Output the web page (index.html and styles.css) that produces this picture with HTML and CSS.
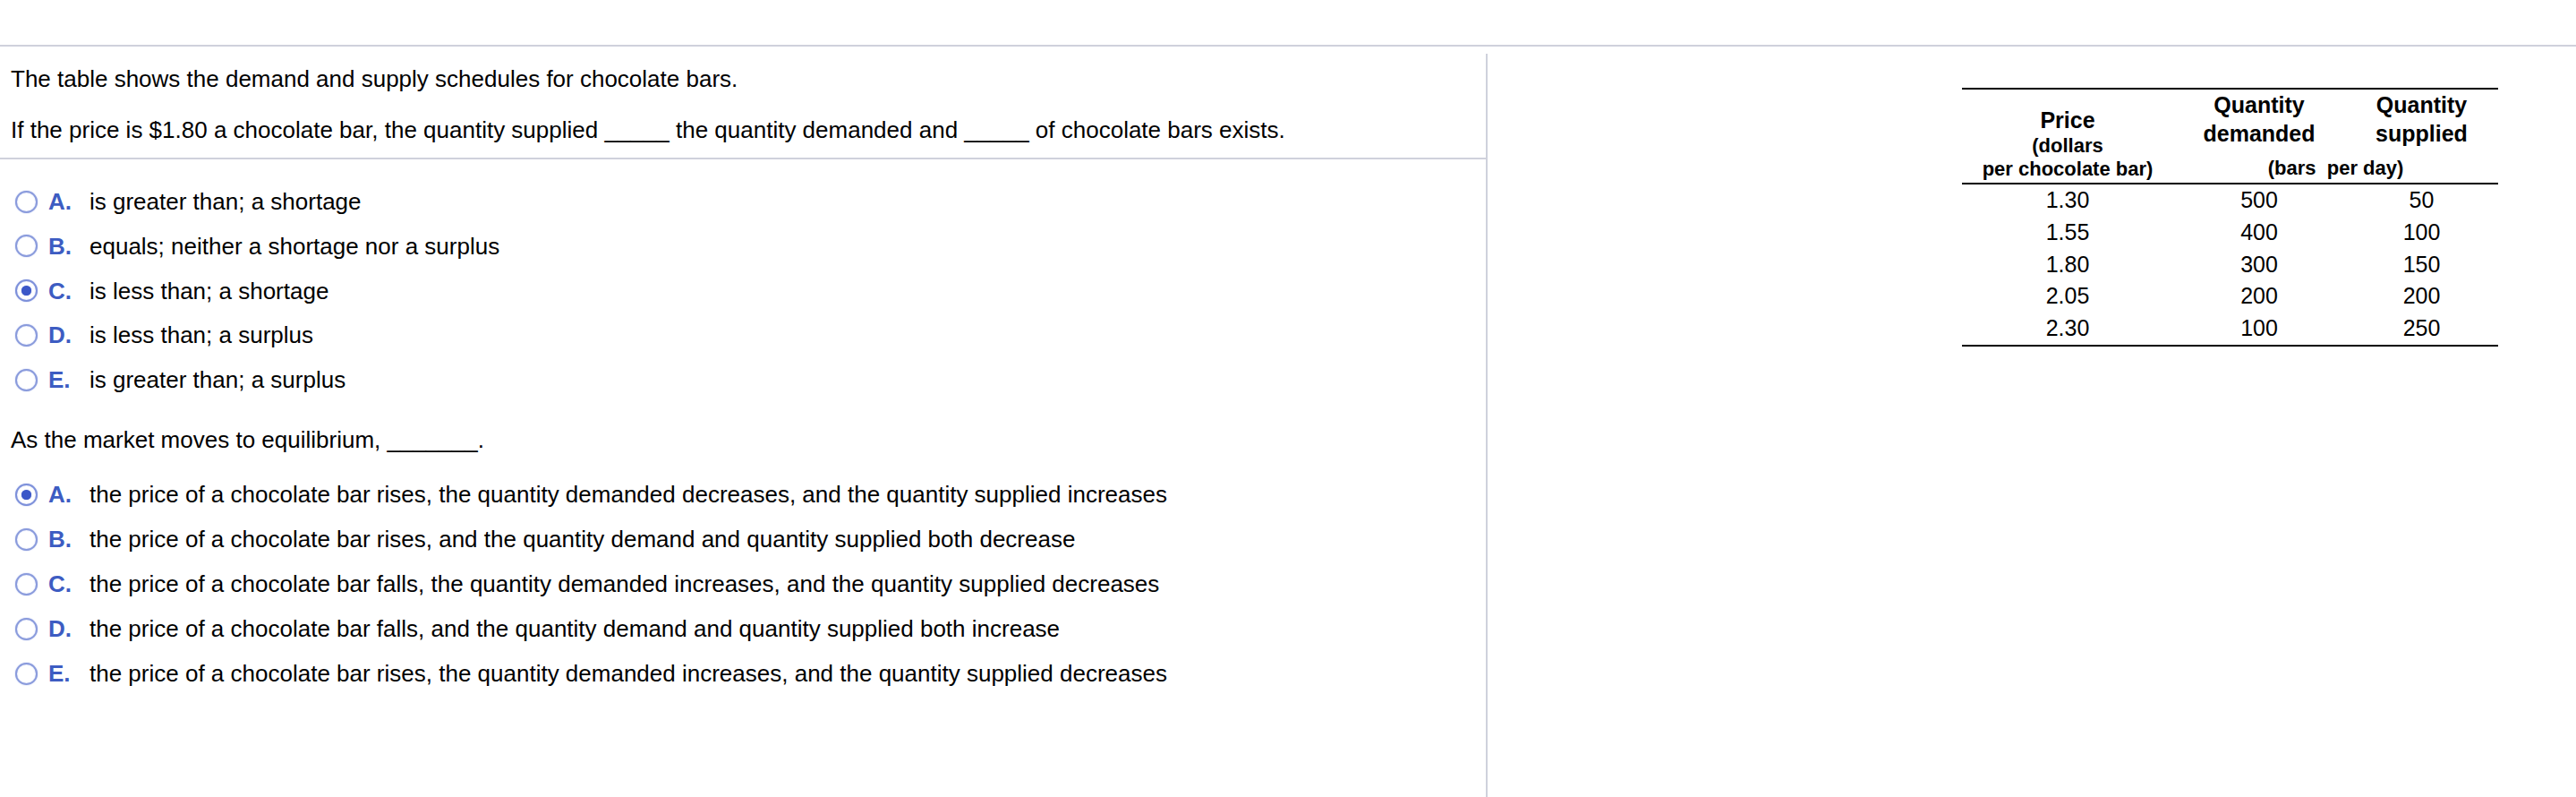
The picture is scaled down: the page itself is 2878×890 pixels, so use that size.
FILE: index.html
```html
<!DOCTYPE html>
<html lang="en">
<head>
<meta charset="utf-8">
<title>Demand and supply schedules</title>
<link rel="stylesheet" href="styles.css">
</head>
<body>
<div class="topbar"></div>
<div class="main">
  <div class="left">
    <div class="question">
      <p class="q-line">The table shows the demand and supply schedules for chocolate bars.</p>
      <p class="q-line q-second">If the price is $1.80 a chocolate bar, the quantity supplied _____ the quantity demanded and _____ of chocolate bars exists.</p>
    </div>
    <ul class="options options-first">
      <li class="option"><span class="radio"></span><span class="letter">A.</span><span class="text">is greater than; a shortage</span></li>
      <li class="option"><span class="radio"></span><span class="letter">B.</span><span class="text">equals; neither a shortage nor a surplus</span></li>
      <li class="option"><span class="radio checked"><span class="dot"></span></span><span class="letter">C.</span><span class="text">is less than; a shortage</span></li>
      <li class="option"><span class="radio"></span><span class="letter">D.</span><span class="text">is less than; a surplus</span></li>
      <li class="option"><span class="radio"></span><span class="letter">E.</span><span class="text">is greater than; a surplus</span></li>
    </ul>
    <p class="q-line q-third">As the market moves to equilibrium, _______.</p>
    <ul class="options options-second">
      <li class="option"><span class="radio checked"><span class="dot"></span></span><span class="letter">A.</span><span class="text">the price of a chocolate bar rises, the quantity demanded decreases, and the quantity supplied increases</span></li>
      <li class="option"><span class="radio"></span><span class="letter">B.</span><span class="text">the price of a chocolate bar rises, and the quantity demand and quantity supplied both decrease</span></li>
      <li class="option"><span class="radio"></span><span class="letter">C.</span><span class="text">the price of a chocolate bar falls, the quantity demanded increases, and the quantity supplied decreases</span></li>
      <li class="option"><span class="radio"></span><span class="letter">D.</span><span class="text">the price of a chocolate bar falls, and the quantity demand and quantity supplied both increase</span></li>
      <li class="option"><span class="radio"></span><span class="letter">E.</span><span class="text">the price of a chocolate bar rises, the quantity demanded increases, and the quantity supplied decreases</span></li>
    </ul>
  </div>
  <div class="right">
    <div class="schedule">
      <div class="sched-head">
        <div class="th-price">
          <span class="th-big">Price</span>
          <span class="th-small">(dollars</span>
          <span class="th-small">per chocolate bar)</span>
        </div>
        <div class="th-qty">Quantity<br>demanded</div>
        <div class="th-qty">Quantity<br>supplied</div>
        <div class="th-unit">(bars&nbsp; per day)</div>
      </div>
      <div class="sched-body">
        <div class="row"><span>1.30</span><span>500</span><span>50</span></div>
        <div class="row"><span>1.55</span><span>400</span><span>100</span></div>
        <div class="row"><span>1.80</span><span>300</span><span>150</span></div>
        <div class="row"><span>2.05</span><span>200</span><span>200</span></div>
        <div class="row"><span>2.30</span><span>100</span><span>250</span></div>
      </div>
    </div>
  </div>
</div>
</body>
</html>
```

FILE: styles.css
```css
html, body {
  margin: 0;
  padding: 0;
  background: #ffffff;
  overflow: hidden;
}

body {
  font-family: "Liberation Sans", Arial, sans-serif;
  color: #000000;
  font-size: 26px;
}

.topbar {
  height: 50px;
  border-bottom: 2px solid #cfd1dc;
}

.main {
  display: flex;
  padding-top: 8px;
}

.left {
  width: 1660px;
  min-height: 830px;
  border-right: 2px solid #cfd1dc;
  flex: none;
}

.question {
  padding: 13px 0 16px 12px;
  border-bottom: 2px solid #cfd1dc;
}

.q-line {
  margin: 0;
  line-height: 30px;
  white-space: nowrap;
}

.q-second {
  margin-top: 27px;
}

.q-third {
  margin-top: 37px;
  padding-left: 12px;
}

.options {
  list-style: none;
  margin: 0;
  padding: 0 0 0 12px;
  display: flex;
  flex-direction: column;
}

.options-first {
  padding-top: 32px;
  gap: 19.75px;
}

.options-second {
  margin-top: 31px;
  gap: 20px;
}

.option {
  display: flex;
  align-items: center;
  line-height: 30px;
  height: 30px;
  white-space: nowrap;
}

.radio {
  flex: none;
  width: 25px;
  height: 25px;
  box-sizing: border-box;
  margin-left: 5px;
  margin-right: 12px;
  border-radius: 50%;
  border: 2px solid #8a9bdc;
  background: #ffffff;
  box-shadow: 0 0 1.5px #aebbeb, inset 0 0 1.5px #c3cdf2;
  display: flex;
  align-items: center;
  justify-content: center;
}

.radio.checked {
  border-color: #7d90da;
}

.dot {
  width: 11px;
  height: 11px;
  border-radius: 50%;
  background: #3b57c8;
  box-shadow: 0 0 1px #5f77d4;
}

.letter {
  flex: none;
  width: 46px;
  font-weight: bold;
  color: #3d5cc2;
}

.right {
  flex: 1;
  padding-top: 38px;
  padding-left: 530px;
}

.schedule {
  width: 599px;
  border-top: 2px solid #000000;
  border-bottom: 2px solid #000000;
}

.sched-head {
  display: grid;
  grid-template-columns: 236px 192px 171px;
  grid-template-rows: 65px 39px;
  border-bottom: 2px solid #000000;
  font-weight: bold;
  text-align: center;
}

.th-price {
  grid-row: 1 / 3;
  grid-column: 1;
  padding-top: 18px;
}

.th-big {
  display: block;
  font-size: 25px;
  line-height: 32px;
}

.th-small {
  display: block;
  font-size: 22px;
  line-height: 26px;
}

.th-qty {
  grid-row: 1;
  padding-top: 1px;
  font-size: 25px;
  line-height: 32px;
}

.th-unit {
  grid-row: 2;
  grid-column: 2 / 4;
  padding-top: 10px;
  font-size: 22px;
  line-height: 26px;
  white-space: nowrap;
}

.row {
  display: grid;
  grid-template-columns: 236px 192px 171px;
  text-align: center;
  font-size: 25px;
  line-height: 35.75px;
}
```
